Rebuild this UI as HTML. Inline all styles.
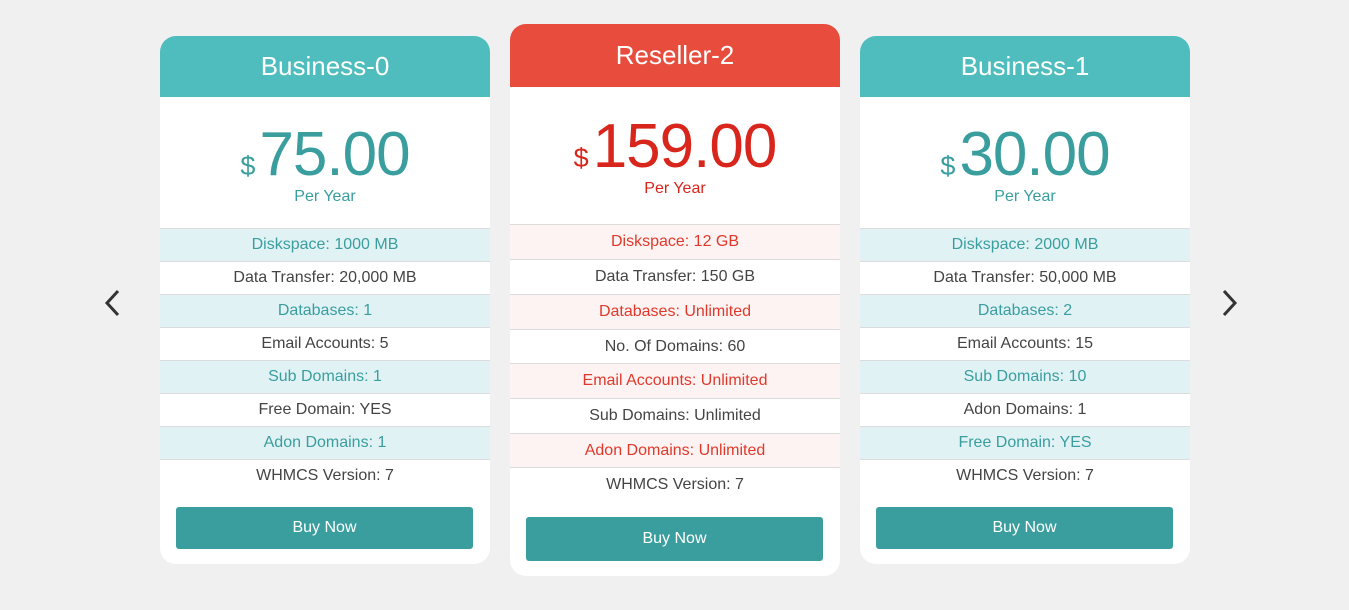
<!DOCTYPE html>
<html><head><style>
body{margin:0;width:1349px;height:610px;background:#f0f0f0;font-family:"Liberation Sans",sans-serif;position:relative;overflow:hidden}
.card{position:absolute;width:330px;background:#fff;border-radius:16px;overflow:hidden;text-align:center}
.hd{color:#fff;font-size:26px;font-weight:300;display:flex;align-items:center;justify-content:center}
.price{position:relative}
.amt{font-size:62px;line-height:1;letter-spacing:-1px}
.cur{font-size:27px;margin-right:4px}
.py{font-size:16px}
.row{font-size:16px;color:#444;border-top:1px solid #dcdcdc;box-sizing:border-box;display:flex;align-items:center;justify-content:center}
.btn{position:absolute;left:16px;width:297px;background:#3b9e9e;color:#fff;font-size:16px;border-radius:3px;display:flex;align-items:center;justify-content:center}
.t .hd{background:#4fbdbd}.t .amt,.t .cur,.t .py{color:#3a9e9e}.t .a{background:#e1f2f5;color:#3a9e9e}
.r .hd{background:#e84c3d}.r .amt,.r .cur,.r .py{color:#d9261c}.r .a{background:#fdf3f2;color:#e0392b}
.arr{position:absolute;top:289px;width:16px;height:28px}
</style></head><body>
<svg class="arr" style="left:104px" viewBox="0 0 16 28"><path d="M14 2L3 14l11 12" fill="none" stroke="#333" stroke-width="3"/></svg>
<svg class="arr" style="left:1222px" viewBox="0 0 16 28"><path d="M2 2l11 12L2 26" fill="none" stroke="#333" stroke-width="3"/></svg>

<div class="card t" style="left:160px;top:36px;height:528px">
<div class="hd" style="height:61px">Business-0</div>
<div class="price" style="height:131px"><div style="padding-top:27px"><span class="cur">$</span><span class="amt">75.00</span></div><div class="py" style="margin-top:2px">Per Year</div></div>
<div class="row a" style="height:33px">Diskspace: 1000 MB</div>
<div class="row" style="height:33px">Data Transfer: 20,000 MB</div>
<div class="row a" style="height:33px">Databases: 1</div>
<div class="row" style="height:33px">Email Accounts: 5</div>
<div class="row a" style="height:33px">Sub Domains: 1</div>
<div class="row" style="height:33px">Free Domain: YES</div>
<div class="row a" style="height:33px">Adon Domains: 1</div>
<div class="row" style="height:33px">WHMCS Version: 7</div>
<div class="btn" style="top:471px;height:42px">Buy Now</div>
</div>

<div class="card r" style="left:510px;top:24px;height:552px">
<div class="hd" style="height:63px">Reseller-2</div>
<div class="price" style="height:137px"><div style="padding-top:29px"><span class="cur">$</span><span class="amt">159.00</span></div><div class="py" style="margin-top:2px">Per Year</div></div>
<div class="row a" style="height:35px">Diskspace: 12 GB</div>
<div class="row" style="height:35px">Data Transfer: 150 GB</div>
<div class="row a" style="height:35px">Databases: Unlimited</div>
<div class="row" style="height:34px">No. Of Domains: 60</div>
<div class="row a" style="height:35px">Email Accounts: Unlimited</div>
<div class="row" style="height:35px">Sub Domains: Unlimited</div>
<div class="row a" style="height:34px">Adon Domains: Unlimited</div>
<div class="row" style="height:35px">WHMCS Version: 7</div>
<div class="btn" style="top:493px;height:44px">Buy Now</div>
</div>

<div class="card t" style="left:860px;top:36px;height:528px">
<div class="hd" style="height:61px">Business-1</div>
<div class="price" style="height:131px"><div style="padding-top:27px"><span class="cur">$</span><span class="amt">30.00</span></div><div class="py" style="margin-top:2px">Per Year</div></div>
<div class="row a" style="height:33px">Diskspace: 2000 MB</div>
<div class="row" style="height:33px">Data Transfer: 50,000 MB</div>
<div class="row a" style="height:33px">Databases: 2</div>
<div class="row" style="height:33px">Email Accounts: 15</div>
<div class="row a" style="height:33px">Sub Domains: 10</div>
<div class="row" style="height:33px">Adon Domains: 1</div>
<div class="row a" style="height:33px">Free Domain: YES</div>
<div class="row" style="height:33px">WHMCS Version: 7</div>
<div class="btn" style="top:471px;height:42px">Buy Now</div>
</div>
</body></html>
